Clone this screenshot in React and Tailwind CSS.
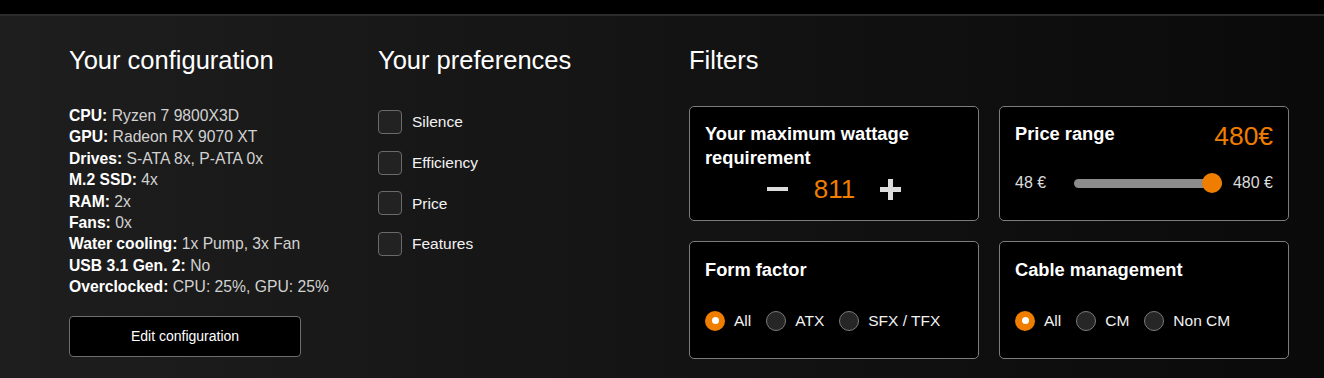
import React, { useState } from "react";

const configItems = [
  ["CPU:", "Ryzen 7 9800X3D"],
  ["GPU:", "Radeon RX 9070 XT"],
  ["Drives:", "S-ATA 8x, P-ATA 0x"],
  ["M.2 SSD:", "4x"],
  ["RAM:", "2x"],
  ["Fans:", "0x"],
  ["Water cooling:", "1x Pump, 3x Fan"],
  ["USB 3.1 Gen. 2:", "No"],
  ["Overclocked:", "CPU: 25%, GPU: 25%"],
];

const preferences = ["Silence", "Efficiency", "Price", "Features"];

function Radio({ label, checked, onClick }) {
  return (
    <button onClick={onClick} className="flex items-center mr-[15px] cursor-pointer">
      {checked ? (
        <span className="w-[20px] h-[20px] rounded-full bg-[#ee7d00] flex items-center justify-center">
          <span className="w-[7px] h-[7px] rounded-full bg-white"></span>
        </span>
      ) : (
        <span className="w-[20px] h-[20px] rounded-full bg-[#262626] border-[1.5px] border-[#7a7a7a]"></span>
      )}
      <span className="ml-[9px] text-[15.5px] text-[#f2f2f2]">{label}</span>
    </button>
  );
}

function Card({ children, className = "" }) {
  return (
    <div className={`bg-black border border-[#7c7c7c] rounded-[5px] px-[15px] ${className}`}>
      {children}
    </div>
  );
}

export default function App() {
  const [wattage, setWattage] = useState(811);
  const [prefs, setPrefs] = useState({});
  const [formFactor, setFormFactor] = useState("All");
  const [cable, setCable] = useState("All");

  return (
    <div
      className="min-h-[378px] text-white"
      style={{ fontFamily: '"Liberation Sans", Arial, sans-serif' }}
    >
      <div className="h-[14px] bg-black"></div>
      <div className="h-[2px] bg-[#2c2c2c]"></div>
      <div className="bg-gradient-to-r from-[#1e1e1e] to-[#0a0a0a] h-[362px] pl-[69px] pt-[29px]">
        <div className="grid grid-cols-[309px_311px_600px]">
          {/* Your configuration */}
          <div>
            <h2 className="text-[25.5px] leading-[30px] font-normal">Your configuration</h2>
            <div className="mt-[30px] text-[15.7px] leading-[21.4px]">
              {configItems.map(([label, value]) => (
                <div key={label}>
                  <span className="font-bold text-white">{label}</span>{" "}
                  <span className="text-[#d2d2d2]">{value}</span>
                </div>
              ))}
            </div>
            <button className="mt-[18px] w-[232px] h-[41px] bg-black border border-[#6e6e6e] rounded-[4px] text-[14px] text-white cursor-pointer">
              Edit configuration
            </button>
          </div>

          {/* Your preferences */}
          <div>
            <h2 className="text-[25.5px] leading-[30px] font-normal">Your preferences</h2>
            <div className="mt-[35px] flex flex-col gap-[16.7px]">
              {preferences.map((p) => (
                <label key={p} className="flex items-center cursor-pointer">
                  <span
                    onClick={() => setPrefs({ ...prefs, [p]: !prefs[p] })}
                    className="w-[24px] h-[24px] rounded-[4px] bg-[#222] border-[1.5px] border-[#6a6a6a] flex items-center justify-center"
                  >
                    {prefs[p] && <span className="w-[12px] h-[12px] bg-[#ee7d00] rounded-[2px]"></span>}
                  </span>
                  <span className="ml-[10px] text-[15.5px] text-[#f2f2f2]">{p}</span>
                </label>
              ))}
            </div>
          </div>

          {/* Filters */}
          <div>
            <h2 className="text-[25.5px] leading-[30px] font-normal">Filters</h2>
            <div className="mt-[31px] grid grid-cols-[290px_290px] gap-x-[20px] gap-y-[20px]">
              <Card className="h-[115px] pt-[15px]">
                <div className="text-[18.3px] leading-[24px] font-bold">
                  Your maximum wattage
                  <br />
                  requirement
                </div>
                <div className="mt-[3px] h-[32px] flex items-center justify-center">
                  <button onClick={() => setWattage(wattage - 1)} className="w-[21px] h-[20px] flex items-center cursor-pointer">
                    <span className="w-[21px] h-[4px] bg-[#dcdcdc]"></span>
                  </button>
                  <span className="ml-[26px] mr-[25px] text-[26px] text-[#ee7d00] leading-[32px]">{wattage}</span>
                  <button onClick={() => setWattage(wattage + 1)} className="relative w-[21px] h-[21px] cursor-pointer">
                    <span className="absolute left-0 top-[8px] w-[21px] h-[5px] bg-[#dcdcdc]"></span>
                    <span className="absolute top-0 left-[8px] w-[5px] h-[21px] bg-[#dcdcdc]"></span>
                  </button>
                </div>
              </Card>

              <Card className="h-[115px] pt-[14px]">
                <div className="flex justify-between items-start">
                  <div className="text-[18.3px] leading-[24px] font-bold mt-[1px]">Price range</div>
                  <div className="text-[26.4px] leading-[30px] text-[#ee7d00]">480€</div>
                </div>
                <div className="mt-[20px] flex items-center text-[16px] text-[#dcdcdc]">
                  <span className="w-[59px]">48 €</span>
                  <div className="relative w-[148px] h-[20px] flex items-center">
                    <div className="w-full h-[9px] rounded-full bg-[#8c8c8c]"></div>
                    <div className="absolute right-0 top-0 w-[20px] h-[20px] rounded-full bg-[#ee7d00]"></div>
                  </div>
                  <span className="ml-[11px]">480 €</span>
                </div>
              </Card>

              <Card className="h-[118px] pt-[16px]">
                <div className="text-[18.3px] leading-[24px] font-bold">Form factor</div>
                <div className="mt-[27px] flex items-center">
                  {["All", "ATX", "SFX / TFX"].map((o) => (
                    <Radio key={o} label={o} checked={formFactor === o} onClick={() => setFormFactor(o)} />
                  ))}
                </div>
              </Card>

              <Card className="h-[118px] pt-[16px]">
                <div className="text-[18.3px] leading-[24px] font-bold">Cable management</div>
                <div className="mt-[27px] flex items-center">
                  {["All", "CM", "Non CM"].map((o) => (
                    <Radio key={o} label={o} checked={cable === o} onClick={() => setCable(o)} />
                  ))}
                </div>
              </Card>
            </div>
          </div>
        </div>
      </div>
    </div>
  );
}
